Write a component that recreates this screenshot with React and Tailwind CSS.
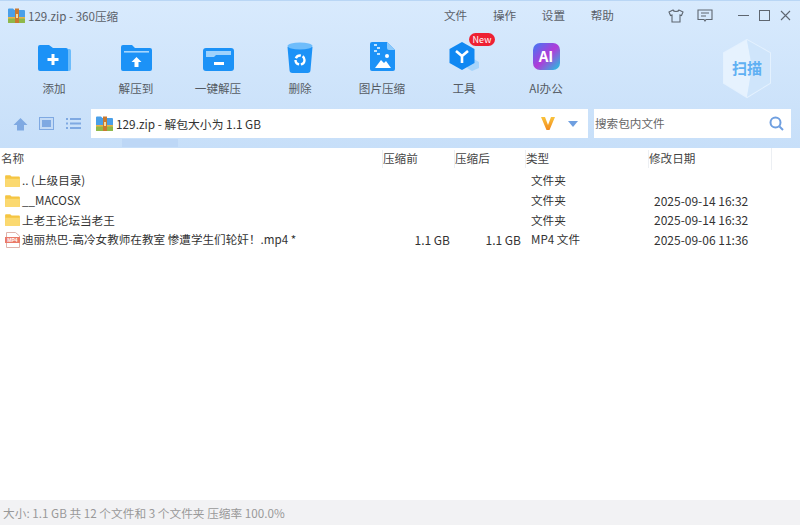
const FONT = '"Noto Sans CJK SC", "Noto Sans", sans-serif';

function ZipIcon({ size = 17 }) {
  return (
    <svg width={size} height={size} viewBox="0 0 17 17" className="shrink-0">
      <path d="M0 2.500a1 1 0 0 1 1-1h4l1.500 1.500H16a1 1 0 0 1 1 1V11H0z" fill="#4a9fe8" />
      <rect x="0" y="11" width="17" height="5" rx="0.500" fill="#8fb84a" />
      <rect x="0" y="10" width="17" height="1.500" fill="#e8b44a" />
      <rect x="7" y="1.500" width="4" height="14.500" fill="#c9792f" />
      <rect x="8" y="7" width="2" height="4" fill="#f5dca0" />
    </svg>
  );
}

function FolderAdd() {
  return (
    <svg width="33" height="26" viewBox="0 0 33 26">
      <path d="M0 2a2 2 0 0 1 2-2h9l4 3h13a2 2 0 0 1 2 2v21H2a2 2 0 0 1-2-2z" fill="#1c92f7" />
      <path d="M31 4h.5A1.500 1.500 0 0 1 33 5.500V24a2 2 0 0 1-2 2h-1V4z" fill="#6cbcfb" />
      <path d="M13.500 9h3v4h4v3h-4v4h-3v-4h-4v-3h4z" fill="#fff" />
    </svg>
  );
}

function FolderUp() {
  return (
    <svg width="31" height="26" viewBox="0 0 31 26">
      <path d="M0 2a2 2 0 0 1 2-2h9l3 3h15a2 2 0 0 1 2 2v19a2 2 0 0 1-2 2H2a2 2 0 0 1-2-2z" fill="#1c92f7" />
      <rect x="3" y="6" width="25" height="1.600" fill="#a6d6fd" />
      <path d="M15.500 12l5 5h-3v5h-4v-5h-3z" fill="#fff" />
    </svg>
  );
}

function FolderMinus() {
  return (
    <svg width="31" height="23" viewBox="0 0 31 23">
      <rect width="31" height="23" rx="3" fill="#1c92f7" />
      <path d="M3 3h25v4H13l-2 2H3z" fill="#9ed2fc" />
      <rect x="11" y="14" width="10" height="3" fill="#fff" />
    </svg>
  );
}

function TrashIcon() {
  return (
    <svg width="26" height="31" viewBox="0 0 26 31" className="-mb-[2px]">
      <path d="M.5 5h25l-2 23a3 3 0 0 1-3 3h-15a3 3 0 0 1-3-3z" fill="#1c92f7" />
      <ellipse cx="13" cy="4" rx="12.500" ry="3.500" fill="#6fbdfb" />
      <circle cx="13" cy="18" r="4.500" fill="none" stroke="#fff" strokeWidth="2.400" strokeDasharray="6 1.800" />
    </svg>
  );
}

function ImageZipIcon() {
  return (
    <svg width="25" height="29" viewBox="0 0 25 29">
      <path d="M2 0h15l8 8v19a2 2 0 0 1-2 2H2a2 2 0 0 1-2-2V2a2 2 0 0 1 2-2z" fill="#1c92f7" />
      <path d="M17 0l8 8h-6a2 2 0 0 1-2-2z" fill="#8ccafc" />
      <path d="M4 2h3v2H4zM7 5h3v2H7zM4 8h3v2H4zM7 11h3v2H7z" fill="#bfe2fe" />
      <path d="M5 26l6-8 3 3 2-2 5 7z" fill="#fff" />
      <circle cx="17" cy="14" r="2" fill="#fff" />
    </svg>
  );
}

function ToolIcon() {
  return (
    <svg width="31" height="29" viewBox="0 0 31 29">
      <path d="M23 16l7 4v6l-7 3-5-3z" fill="#a6d4fb" />
      <path d="M13 0l12.500 7v14L13 28 .5 21V7z" fill="#1088f2" />
      <path d="M7 9l6 5 6-5M13 14v7" fill="none" stroke="#fff" strokeWidth="2.600" />
    </svg>
  );
}

function AiIcon() {
  return (
    <div className="mb-[1px] flex h-[27px] w-[27px] items-center justify-center rounded-[7px] bg-[linear-gradient(135deg,#3d7bf5_0%,#b03bd8_50%,#19c9e0_100%)] text-[15px] font-bold text-white">
      AI
    </div>
  );
}

function ToolItem({ label, children }) {
  return (
    <div className="flex w-[82px] flex-col items-center">
      <div className="flex h-[31px] items-end justify-center">{children}</div>
      <div className="mt-[9px] text-[11.6px] leading-[16px] whitespace-nowrap text-[#555b63]">{label}</div>
    </div>
  );
}

function ScanBadge() {
  return (
    <svg width="50" height="60" viewBox="0 0 50 60">
      <path d="M25 1l23 13v30L25 58 2 44V14z" fill="#d8ebfd" stroke="#e4f1fe" strokeWidth="2" />
      <path d="M25 1L2 14v30l23 14 5-30z" fill="#e6f2fe" />
      <path d="M25 1l23 13v30L25 58l5-30z" fill="#cfe5fb" />
      <text x="25" y="35" textAnchor="middle" fontSize="15" fontWeight="700" fill="#5fb0f3" fontFamily={FONT}>扫描</text>
    </svg>
  );
}

function FolderIcon() {
  return (
    <svg width="15" height="12" viewBox="0 0 16 13" className="shrink-0">
      <path d="M0 1.200a1 1 0 0 1 1-1h4.500L7 1.700h8a1 1 0 0 1 1 1V12a1 1 0 0 1-1 1H1a1 1 0 0 1-1-1z" fill="#f5c542" />
      <path d="M0 4h16v8a1 1 0 0 1-1 1H1a1 1 0 0 1-1-1z" fill="#fbd970" />
    </svg>
  );
}

function Mp4Icon() {
  return (
    <svg width="15" height="16" viewBox="0 0 15 16" className="shrink-0">
      <path d="M1.500.5h9l4 3.500v11.500h-13z" fill="#fff" stroke="#dfb3ab" />
      <rect x="0" y="5" width="15" height="6" fill="#ea7a68" />
      <text x="7.500" y="10" textAnchor="middle" fontSize="5" fontWeight="700" fill="#fff" fontFamily="Liberation Sans">MP4</text>
    </svg>
  );
}

const rows = [
  { icon: 'folder', name: '.. (上级目录)', type: '文件夹' },
  { icon: 'folder', name: '__MACOSX', type: '文件夹', date: '2025-09-14 16:32' },
  { icon: 'folder', name: '上老王论坛当老王', type: '文件夹', date: '2025-09-14 16:32' },
  { icon: 'mp4', name: '迪丽热巴-高冷女教师在教室 惨遭学生们轮奸！.mp4 *', before: '1.1 GB', after: '1.1 GB', type: 'MP4 文件', date: '2025-09-06 11:36' },
];

export default function App() {
  return (
    <div className="flex h-[525px] w-[800px] flex-col overflow-hidden bg-white text-[11.6px] text-[#333]" style={{ fontFamily: FONT }}>
      <div className="h-[148px] shrink-0 border-t border-[#b9d6f5] bg-[linear-gradient(180deg,#d8eafd_0%,#c7dff9_100%)]">
        {/* title bar */}
        <div className="flex h-[29px] items-center pl-[8px]">
          <ZipIcon />
          <span className="ml-[3px] w-[92px] pt-[3px] text-[11.6px] whitespace-nowrap text-[#5a6068]">129.zip - 360压缩</span>
          <div className="ml-[324px] flex w-[170px] justify-between text-[#5a6068]">
            <span>文件</span>
            <span>操作</span>
            <span>设置</span>
            <span>帮助</span>
          </div>
          <div className="ml-[54px] flex items-center gap-[13px] text-[#5e6670]">
            <svg width="16" height="14" viewBox="0 0 16 14" fill="none" stroke="currentColor" strokeWidth="1.100">
              <path d="M5 1L1 3l1.500 3.500L4 6v7h8V6l1.500.5L15 3l-4-2c-.5 2-5.500 2-6 0z" />
            </svg>
            <svg width="16" height="13" viewBox="0 0 16 13" fill="none" stroke="currentColor" strokeWidth="1.100">
              <path d="M1 1h14v9.500H9l-1 1.500-1-1.500H1z" />
              <path d="M4 4h8M4 7h5" />
            </svg>
          </div>
          <div className="ml-[25px] flex items-center gap-[10px] text-[#5e6670]">
            <div className="h-px w-[11px] bg-current" />
            <div className="h-[11px] w-[11px] border-[1.5px] border-current" />
            <svg width="11" height="11" viewBox="0 0 11 11" stroke="currentColor" strokeWidth="1.100">
              <path d="M1 1l9 9M10 1l-9 9" />
            </svg>
          </div>
        </div>

        {/* toolbar */}
        <div className="flex h-[79px] items-start pt-[10px] pl-[13px]">
          <ToolItem label="添加"><FolderAdd /></ToolItem>
          <ToolItem label="解压到"><FolderUp /></ToolItem>
          <ToolItem label="一键解压"><FolderMinus /></ToolItem>
          <ToolItem label="删除"><TrashIcon /></ToolItem>
          <ToolItem label="图片压缩"><ImageZipIcon /></ToolItem>
          <div className="relative">
            <ToolItem label="工具"><ToolIcon /></ToolItem>
            <div className="absolute top-[-7px] left-[46px] flex h-[13px] w-[26px] items-center justify-center rounded-full bg-[#ee2033] text-[9px] leading-none text-white">New</div>
          </div>
          <ToolItem label="AI办公"><AiIcon /></ToolItem>
          <div className="ml-[135px] -mt-[1px]"><ScanBadge /></div>
        </div>

        {/* address bar */}
        <div className="flex h-[29px] items-center pr-[9px]">
          <div className="flex w-[91px] items-center pl-[13px]">
            <svg width="15" height="14" viewBox="0 0 15 14" fill="#7fa9e2">
              <path d="M7.500 1l7 7h-3.500v5.500H4V8H.5z" />
            </svg>
            <svg className="ml-[11px]" width="15" height="13" viewBox="0 0 15 13">
              <rect x="0.500" y="0.500" width="14" height="12" fill="#c4dbf6" stroke="#7fa9e2" />
              <rect x="3" y="3" width="9" height="7" fill="#7fa9e2" />
            </svg>
            <svg className="ml-[12px]" width="15" height="11" viewBox="0 0 15 11" fill="#7fa9e2">
              <path d="M0 0h2v2H0zM4 0h11v2H4zM0 4.500h2v2H0zM4 4.500h11v2H4zM0 9h2v2H0zM4 9h11v2H4z" />
            </svg>
          </div>
          <div className="flex h-[29px] w-[497px] items-center bg-white pl-[5px]">
            <ZipIcon />
            <span className="ml-[3px] text-[11.8px] text-[#333]">129.zip - 解包大小为 1.1 GB</span>
            <svg className="ml-auto" width="16" height="15" viewBox="0 0 16 15">
              <defs>
                <linearGradient id="vmark" x1="0" y1="0" x2="0" y2="1">
                  <stop offset="0" stopColor="#f9c33c" />
                  <stop offset="1" stopColor="#f2891c" />
                </linearGradient>
              </defs>
              <path d="M1 1h4l3 8 3-8h4L9.500 14h-3z" fill="url(#vmark)" />
            </svg>
            <svg className="ml-[12px] mr-[10px]" width="10" height="6" viewBox="0 0 10 6" fill="#6f9fe0">
              <path d="M0 0h10L5 6z" />
            </svg>
          </div>
          <div className="ml-[6px] flex h-[29px] flex-1 items-center bg-white pl-[1px] pr-[7px]">
            <span className="text-[#666]">搜索包内文件</span>
            <svg className="ml-auto" width="15" height="15" viewBox="0 0 15 15" fill="none" stroke="#6f9fe0" strokeWidth="2">
              <circle cx="6.500" cy="6.500" r="5" />
              <path d="M10.500 10.500l3.500 3.500" />
            </svg>
          </div>
        </div>
        <div className="mt-[1px] ml-[122px] h-[8px] w-[56px] bg-[#bdd7f6]" />
      </div>

      {/* column header */}
      <div className="grid h-[22px] shrink-0 grid-cols-[382px_72px_71px_123px_123px_1fr] items-center text-[#444]">
        <span className="pl-[1px]">名称</span>
        <span className="border-l border-[#eceff3]">压缩前</span>
        <span className="border-l border-[#eceff3]">压缩后</span>
        <span className="border-l border-[#eceff3]">类型</span>
        <span className="border-l border-[#eceff3]">修改日期</span>
        <span className="h-full border-l border-[#eceff3]" />
      </div>

      {/* file list */}
      <div className="flex-1 pt-[1px]">
        {rows.map((row) => (
          <div key={row.name} className="grid h-[19.7px] grid-cols-[383px_67px_71px_10px_123px_1fr] items-center text-[#333]">
            <div className="flex items-center pl-[5px]">
              <div className="flex w-[17px] items-center">
                {row.icon === 'folder' ? <FolderIcon /> : <Mp4Icon />}
              </div>
              <span className="whitespace-nowrap">{row.name}</span>
            </div>
            <span className="text-right text-[12px]">{row.before}</span>
            <span className="text-right text-[12px]">{row.after}</span>
            <span />
            <span>{row.type}</span>
            <span className="text-[12px]">{row.date}</span>
          </div>
        ))}
      </div>

      {/* status bar */}
      <div className="flex h-[25px] shrink-0 items-center bg-[#f2f2f4] pl-[3px] text-[11.7px] text-[#999]">
        大小: 1.1 GB 共 12 个文件和 3 个文件夹 压缩率 100.0%
      </div>
    </div>
  );
}
